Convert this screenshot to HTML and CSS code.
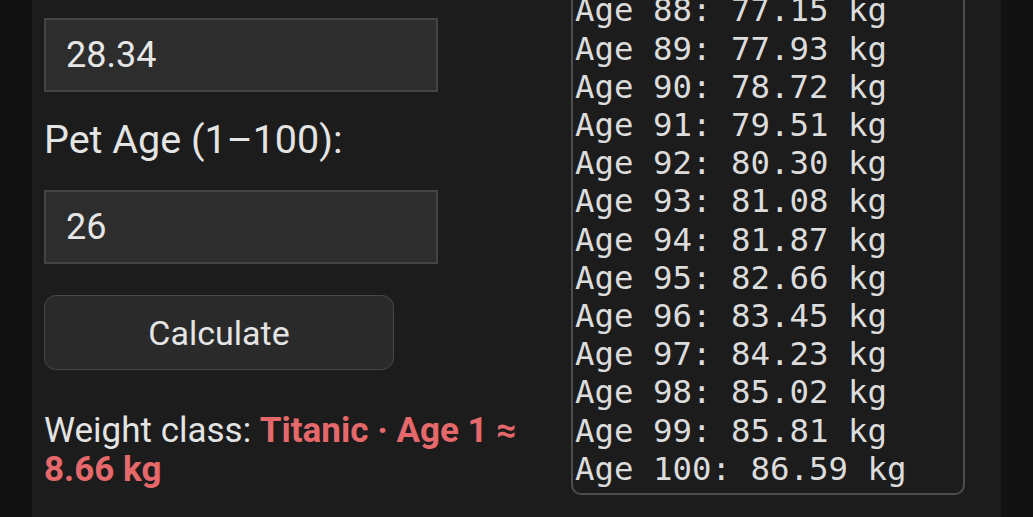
FILE: index.html
```html
<!DOCTYPE html>
<html lang="en">
<head>
    <meta charset="UTF-8">
    <meta name="viewport" content="width=device-width, initial-scale=1.0">
    <title>Pet Weight Calculator</title>
    <link rel="stylesheet" href="styles.css">
</head>
<body>
    <div class="app">
        <div class="row">
            <div class="form">
                <h1>Pet Weight Calculator</h1>
                <label class="label" for="weight">Pet Weight (kg):</label>
                <input class="field" id="weight" type="text" value="28.34">
                <label class="label" for="age">Pet Age (1–100):</label>
                <input class="field field-age" id="age" type="text" value="26">
                <button class="btn">Calculate</button>
                <p class="result">Weight class: <strong>Titanic · Age 1 ≈ 8.66 kg</strong></p>
            </div>
<pre class="table">Age 84: 74.00 kg
Age 85: 74.79 kg
Age 86: 75.57 kg
Age 87: 76.36 kg
Age 88: 77.15 kg
Age 89: 77.93 kg
Age 90: 78.72 kg
Age 91: 79.51 kg
Age 92: 80.30 kg
Age 93: 81.08 kg
Age 94: 81.87 kg
Age 95: 82.66 kg
Age 96: 83.45 kg
Age 97: 84.23 kg
Age 98: 85.02 kg
Age 99: 85.81 kg
Age 100: 86.59 kg</pre>
        </div>
    </div>
</body>
</html>
```

FILE: styles.css
```css
html, body { margin: 0; height: 100%; overflow: hidden; }
body { background: #121212; font-family: Roboto, "Noto Sans", sans-serif; color: #e4e4e4; padding: 0 32px; }
.app { height: 100%; background: #1c1c1c; display: flex; flex-direction: column; justify-content: flex-end; padding: 0 36px 22px 12px; box-sizing: border-box; }
.row { display: flex; align-items: flex-end; gap: 27px; }
.form { width: 500px; display: flex; flex-direction: column; align-items: flex-start; }
h1 { font-size: 44px; font-weight: 700; margin: 0 0 30px; }
.label { font-size: 39.5px; line-height: 45.7px; }
.label:first-of-type { margin-bottom: 27px; }
.field { width: 394px; height: 74px; box-sizing: border-box; background: #2d2d2d; border: 2px solid #444; color: #e6e6e6; font-family: Roboto, sans-serif; font-size: 36px; padding: 0 20px; margin: 0 0 25px; outline: none; }
.field-age { margin-top: 27px; margin-bottom: 31px; }
.btn { width: 350px; height: 75px; background: #2a2a2a; border: 1px solid #484848; border-radius: 12px; color: #e4e4e4; font-family: Roboto, sans-serif; font-size: 34px; margin-bottom: 41px; cursor: pointer; }
.result { font-size: 35px; line-height: 39px; margin: 0 0 6px; }
.result strong { color: #e5686b; font-weight: 700; }
.table { width: 394px; box-sizing: border-box; margin: 0; border: 2px solid #4d4d4d; border-radius: 10px; padding: 0 2px 5px; font-family: "DejaVu Sans Mono", monospace; font-size: 32.4px; line-height: 38.2px; color: #dcdcdc; background: #1c1c1c; }
```
